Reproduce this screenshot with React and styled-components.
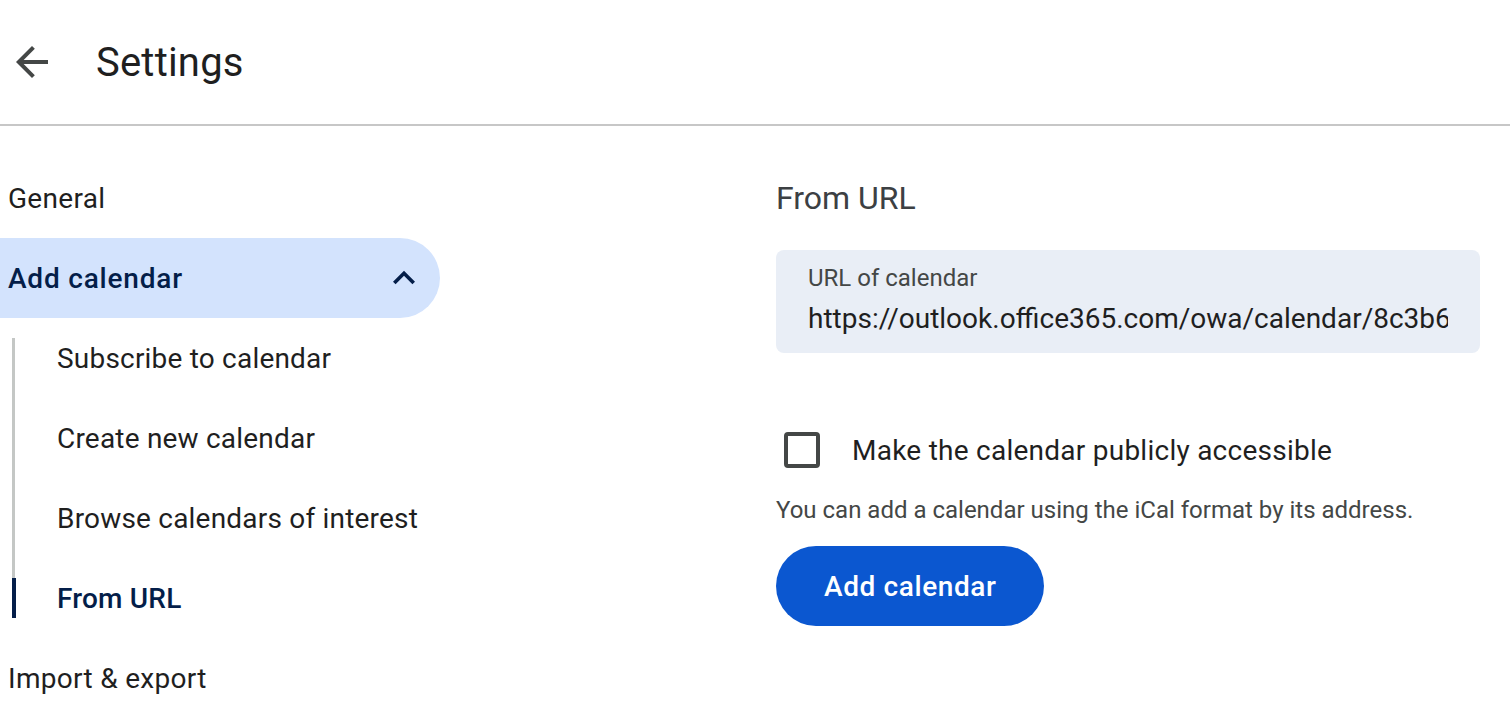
import React, { useState } from "react";
import styled, { createGlobalStyle } from "styled-components";

const GlobalStyle = createGlobalStyle`
  body {
    margin: 0;
    background: #ffffff;
    font-family: Roboto, "Liberation Sans", Arial, sans-serif;
    color: #1f1f1f;
    overflow: hidden;
  }
`;

const Page = styled.div`
  width: 100%;
  min-height: 100vh;
`;

const TopBar = styled.header`
  display: flex;
  align-items: center;
  gap: 40px;
  height: 124px;
  padding-left: 8px;
  border-bottom: 2px solid #c7c7c7;
`;

const IconButton = styled.button`
  display: flex;
  align-items: center;
  justify-content: center;
  width: 48px;
  height: 48px;
  padding: 0;
  border: none;
  background: none;
  cursor: pointer;
  color: #444746;
`;

const Title = styled.h1`
  margin: 0;
  font-size: 40px;
  font-weight: 400;
  letter-spacing: 0.2px;
  color: #1f1f1f;
`;

const Body = styled.div`
  display: grid;
  grid-template-columns: 440px 1fr;
  column-gap: 336px;
  padding-top: 32px;
`;

const Nav = styled.nav`
  display: flex;
  flex-direction: column;
`;

const NavItem = styled.div`
  display: flex;
  align-items: center;
  justify-content: space-between;
  height: 80px;
  padding: 0 14px 0 8px;
  font-size: 28px;
  font-weight: ${(p) => (p.$open ? 500 : 400)};
  letter-spacing: ${(p) => (p.$open ? "0.8px" : "0.3px")};
  color: ${(p) => (p.$open ? "#041e49" : "#1f1f1f")};
  background: ${(p) => (p.$open ? "#d3e3fd" : "transparent")};
  border-radius: 0 40px 40px 0;
  cursor: pointer;
`;

const SubList = styled.div`
  position: relative;
  display: flex;
  flex-direction: column;

  &::before {
    content: "";
    position: absolute;
    left: 12px;
    top: 20px;
    bottom: 20px;
    width: 3px;
    background: #c4c7c5;
  }
`;

const SubItem = styled.div`
  position: relative;
  display: flex;
  align-items: center;
  height: 80px;
  padding-left: 57px;
  font-size: 28px;
  letter-spacing: 0.2px;
  font-weight: ${(p) => (p.$active ? 500 : 400)};
  color: ${(p) => (p.$active ? "#041e49" : "#1f1f1f")};
  cursor: pointer;

  &::before {
    content: "";
    display: ${(p) => (p.$active ? "block" : "none")};
    position: absolute;
    left: 12px;
    top: 20px;
    width: 4px;
    height: 40px;
    background: #041e49;
  }
`;

const Main = styled.main`
  display: flex;
  flex-direction: column;
  align-items: flex-start;
  padding-right: 30px;
`;

const SectionTitle = styled.h2`
  display: flex;
  align-items: center;
  height: 80px;
  margin: 0;
  font-size: 32px;
  font-weight: 400;
  color: #3c4043;
`;

const Field = styled.label`
  display: flex;
  flex-direction: column;
  gap: 9px;
  box-sizing: border-box;
  width: 100%;
  margin-top: 12px;
  padding: 14px 32px 16px;
  background: #e9eef6;
  border-radius: 8px;
`;

const FieldLabel = styled.span`
  font-size: 24px;
  line-height: 28px;
  color: #444746;
`;

const FieldInput = styled.input`
  width: 100%;
  padding: 0;
  border: none;
  outline: none;
  background: transparent;
  font-family: inherit;
  font-size: 28px;
  line-height: 36px;
  height: 36px;
  color: #1f1f1f;
`;

const CheckRow = styled.label`
  display: flex;
  align-items: center;
  gap: 32px;
  margin: 79px 0 0 8px;
  font-size: 28px;
  letter-spacing: 0.25px;
  color: #1f1f1f;
  cursor: pointer;
`;

const CheckBox = styled.span`
  box-sizing: border-box;
  width: 36px;
  height: 36px;
  border: 4px solid #444746;
  border-radius: 4px;
  background: ${(p) => (p.$checked ? "#444746" : "transparent")};
`;

const Help = styled.p`
  margin: 26px 0 0;
  font-size: 24px;
  line-height: 32px;
  color: #444746;
`;

const PrimaryButton = styled.button`
  height: 80px;
  margin-top: 20px;
  padding: 0 48px;
  border: none;
  border-radius: 40px;
  background: #0b57d0;
  color: #ffffff;
  font-family: inherit;
  font-size: 28px;
  font-weight: 500;
  letter-spacing: 0.6px;
  cursor: pointer;
`;

const BackArrow = () => (
  <svg width="48" height="48" viewBox="0 0 24 24" fill="currentColor">
    <path d="M20 11H7.83l5.59-5.59L12 4l-8 8 8 8 1.41-1.41L7.83 13H20v-2z" />
  </svg>
);

const ChevronUp = () => (
  <svg width="44" height="44" viewBox="0 0 24 24" fill="#041e49">
    <path d="M12 8l-6 6 1.41 1.41L12 10.83l4.59 4.58L18 14z" />
  </svg>
);

const subItems = [
  "Subscribe to calendar",
  "Create new calendar",
  "Browse calendars of interest",
  "From URL",
];

export default function App() {
  const [checked, setChecked] = useState(false);
  const [url, setUrl] = useState(
    "https://outlook.office365.com/owa/calendar/8c3b67a1d0f94e2b9a6c5f3e7d1b2a4c/calendar.ics"
  );

  return (
    <Page>
      <GlobalStyle />
      <TopBar>
        <IconButton aria-label="Back">
          <BackArrow />
        </IconButton>
        <Title>Settings</Title>
      </TopBar>
      <Body>
        <Nav>
          <NavItem>General</NavItem>
          <NavItem $open>
            Add calendar
            <ChevronUp />
          </NavItem>
          <SubList>
            {subItems.map((item) => (
              <SubItem key={item} $active={item === "From URL"}>
                {item}
              </SubItem>
            ))}
          </SubList>
          <NavItem>Import &amp; export</NavItem>
        </Nav>
        <Main>
          <SectionTitle>From URL</SectionTitle>
          <Field>
            <FieldLabel>URL of calendar</FieldLabel>
            <FieldInput value={url} onChange={(e) => setUrl(e.target.value)} />
          </Field>
          <CheckRow onClick={() => setChecked(!checked)}>
            <CheckBox $checked={checked} />
            Make the calendar publicly accessible
          </CheckRow>
          <Help>You can add a calendar using the iCal format by its address.</Help>
          <PrimaryButton>Add calendar</PrimaryButton>
        </Main>
      </Body>
    </Page>
  );
}
